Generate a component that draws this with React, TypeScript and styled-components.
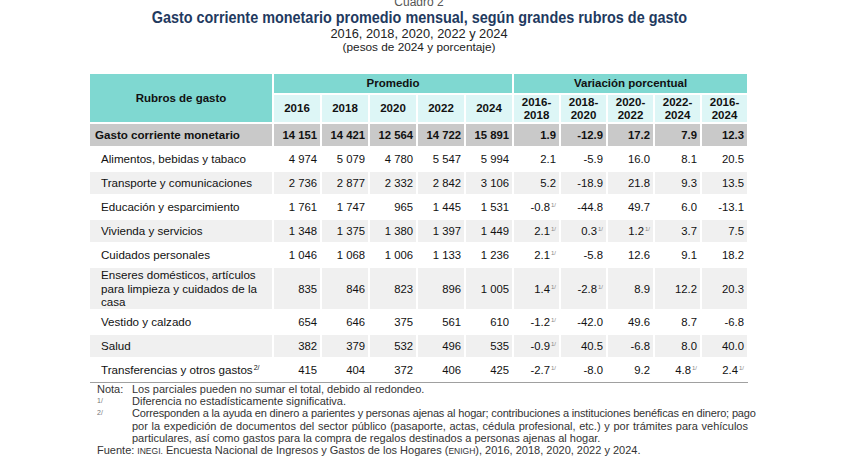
import React from 'react';
import styled, { createGlobalStyle } from 'styled-components';

const Global = createGlobalStyle`
  html, body { margin: 0; padding: 0; background: #ffffff; }
  body {
    width: 850px;
    height: 459px;
    overflow: hidden;
    font-family: "Liberation Sans", Arial, sans-serif;
  }
`;

const Sheet = styled.div`
  width: 658px;
  margin-left: 90px;
  display: flex;
  flex-direction: column;
`;

const Heading = styled.header`
  display: flex;
  flex-direction: column;
  align-items: center;
  margin-top: -5px;
  margin-bottom: 20px;
  color: #222;
`;

const Caption = styled.div`
  font-size: 12px;
  line-height: 14px;
  color: #555;
`;

const Title = styled.h1`
  margin: 0;
  display: inline-block;
  font-size: 16px;
  line-height: 18px;
  font-weight: bold;
  color: #1f3a60;
  white-space: nowrap;
  transform: scaleX(0.9);
`;

const Subtitle = styled.div`
  font-size: 12.8px;
  line-height: 14px;
`;

const Units = styled.div`
  font-size: 11.8px;
  line-height: 13px;
`;

const Table = styled.table`
  border-collapse: separate;
  border-spacing: 2px;
  table-layout: fixed;
  width: 661px;
  margin: -2px -2px -1px -2px;
  font-size: 11.3px;
  color: #111;
`;

const HeadCell = styled.th<{ $tone: 'dark' | 'light'; $h?: number }>`
  background: ${(p) => (p.$tone === 'dark' ? '#7fd8d1' : '#ddf6f6')};
  font-weight: bold;
  text-align: center;
  vertical-align: middle;
  padding: 0 1px;
  height: ${(p) => p.$h ?? 19}px;
  line-height: 13px;
  font-size: 11.5px;
`;

const Row = styled.tr<{ $tone: 'total' | 'shade' | 'plain' }>`
  & > td {
    background: ${(p) =>
      p.$tone === 'total' ? '#c9c9c9' : p.$tone === 'shade' ? '#f0f0f0' : '#ffffff'};
    font-weight: ${(p) => (p.$tone === 'total' ? 'bold' : 'normal')};
  }
`;

const LabelCell = styled.td<{ $indent: number; $h?: number }>`
  text-align: left;
  padding: 0 0 0 ${(p) => p.$indent}px;
  height: ${(p) => p.$h ?? 22}px;
  line-height: 13.5px;
  font-size: 11.6px;
  white-space: nowrap;
`;

const NumCell = styled.td`
  text-align: right;
  padding: 0 3px 0 0;
  white-space: nowrap;
`;

const Mark = styled.sup<{ $dark?: boolean }>`
  font-size: ${(p) => (p.$dark ? '7px' : '6px')};
  font-weight: normal;
  line-height: 0;
  vertical-align: 4px;
  color: ${(p) => (p.$dark ? '#111' : '#888')};
  margin-left: 1px;
`;

const Notes = styled.div`
  border-top: 1px solid #a0a0a0;
  padding: 0 0 0 7px;
  display: grid;
  grid-template-columns: 35px 1fr;
  font-size: 11px;
  line-height: 12.2px;
  color: #333;
`;

const NoteLabel = styled.div<{ $small?: boolean }>`
  font-size: ${(p) => (p.$small ? '7px' : 'inherit')};
  color: ${(p) => (p.$small ? '#777' : 'inherit')};
`;

const NoteText = styled.div`
  min-width: 0;
`;

const NoteLine = styled.div<{ $justify?: boolean; $tight?: boolean }>`
  white-space: nowrap;
  text-align: ${(p) => (p.$justify ? 'justify' : 'left')};
  text-align-last: ${(p) => (p.$justify ? 'justify' : 'auto')};
  letter-spacing: ${(p) => (p.$tight ? '-0.16px' : 'normal')};
`;

const Source = styled.div`
  grid-column: 1 / -1;
`;

const SmallCaps = styled.span`
  font-size: 8.5px;
`;

type Cell = string | [string, string];

interface DataRow {
  label: React.ReactNode;
  values: Cell[];
  tone: 'total' | 'shade' | 'plain';
  indent: number;
  h?: number;
}

const rows: DataRow[] = [
  {
    label: 'Gasto corriente monetario',
    values: ['14 151', '14 421', '12 564', '14 722', '15 891', '1.9', '-12.9', '17.2', '7.9', '12.3'],
    tone: 'total',
    indent: 5,
  },
  {
    label: 'Alimentos, bebidas y tabaco',
    values: ['4 974', '5 079', '4 780', '5 547', '5 994', '2.1', '-5.9', '16.0', '8.1', '20.5'],
    tone: 'plain',
    indent: 11,
  },
  {
    label: 'Transporte y comunicaciones',
    values: ['2 736', '2 877', '2 332', '2 842', '3 106', '5.2', '-18.9', '21.8', '9.3', '13.5'],
    tone: 'shade',
    indent: 11,
  },
  {
    label: 'Educación y esparcimiento',
    values: ['1 761', '1 747', '965', '1 445', '1 531', ['-0.8', '1/'], '-44.8', '49.7', '6.0', '-13.1'],
    tone: 'plain',
    indent: 11,
  },
  {
    label: 'Vivienda y servicios',
    values: ['1 348', '1 375', '1 380', '1 397', '1 449', ['2.1', '1/'], ['0.3', '1/'], ['1.2', '1/'], '3.7', '7.5'],
    tone: 'shade',
    indent: 11,
  },
  {
    label: 'Cuidados personales',
    values: ['1 046', '1 068', '1 006', '1 133', '1 236', ['2.1', '1/'], '-5.8', '12.6', '9.1', '18.2'],
    tone: 'plain',
    indent: 11,
  },
  {
    label: (
      <>
        Enseres domésticos, artículos
        <br />
        para limpieza y cuidados de la
        <br />
        casa
      </>
    ),
    values: ['835', '846', '823', '896', '1 005', ['1.4', '1/'], ['-2.8', '1/'], '8.9', '12.2', '20.3'],
    tone: 'shade',
    indent: 11,
    h: 41,
  },
  {
    label: 'Vestido y calzado',
    values: ['654', '646', '375', '561', '610', ['-1.2', '1/'], '-42.0', '49.6', '8.7', '-6.8'],
    tone: 'plain',
    indent: 11,
  },
  {
    label: 'Salud',
    values: ['382', '379', '532', '496', '535', ['-0.9', '1/'], '40.5', '-6.8', '8.0', '40.0'],
    tone: 'shade',
    indent: 11,
  },
  {
    label: (
      <>
        Transferencias y otros gastos<Mark $dark>2/</Mark>
      </>
    ),
    values: ['415', '404', '372', '406', '425', ['-2.7', '1/'], '-8.0', '9.2', ['4.8', '1/'], ['2.4', '1/']],
    tone: 'plain',
    indent: 11,
  },
];

const years = ['2016', '2018', '2020', '2022', '2024'];
const ranges = ['2016-2018', '2018-2020', '2020-2022', '2022-2024', '2016-2024'];

function renderCell(c: Cell, i: number) {
  if (typeof c === 'string') return <NumCell key={i}>{c}</NumCell>;
  return (
    <NumCell key={i}>
      {c[0]}
      <Mark>{c[1]}</Mark>
    </NumCell>
  );
}

export default function App() {
  return (
    <>
      <Global />
      <Sheet>
        <Heading>
          <Caption>Cuadro 2</Caption>
          <Title>Gasto corriente monetario promedio mensual, según grandes rubros de gasto</Title>
          <Subtitle>2016, 2018, 2020, 2022 y 2024</Subtitle>
          <Units>(pesos de 2024 y porcentaje)</Units>
        </Heading>
        <Table>
          <colgroup>
            <col style={{ width: 182 }} />
            {years.map((y) => (
              <col key={y} style={{ width: 46 }} />
            ))}
            {ranges.map((r) => (
              <col key={r} style={{ width: 45 }} />
            ))}
          </colgroup>
          <thead>
            <tr>
              <HeadCell $tone="dark" rowSpan={2}>
                Rubros de gasto
              </HeadCell>
              <HeadCell $tone="dark" colSpan={5}>
                Promedio
              </HeadCell>
              <HeadCell $tone="dark" colSpan={5}>
                Variación porcentual
              </HeadCell>
            </tr>
            <tr>
              {years.map((y) => (
                <HeadCell key={y} $tone="light" $h={27}>
                  {y}
                </HeadCell>
              ))}
              {ranges.map((r) => {
                const [a, b] = r.split('-');
                return (
                  <HeadCell key={r} $tone="light" $h={27}>
                    {a}-
                    <br />
                    {b}
                  </HeadCell>
                );
              })}
            </tr>
          </thead>
          <tbody>
            {rows.map((r, i) => (
              <Row key={i} $tone={r.tone}>
                <LabelCell $indent={r.indent} $h={r.h}>
                  {r.label}
                </LabelCell>
                {r.values.map(renderCell)}
              </Row>
            ))}
          </tbody>
        </Table>
        <Notes>
          <NoteLabel>Nota:</NoteLabel>
          <NoteText>Los parciales pueden no sumar el total, debido al redondeo.</NoteText>
          <NoteLabel $small>1/</NoteLabel>
          <NoteText>Diferencia no estadísticamente significativa.</NoteText>
          <NoteLabel $small>2/</NoteLabel>
          <NoteText>
            <NoteLine $justify $tight>
              Corresponden a la ayuda en dinero a parientes y personas ajenas al hogar; contribuciones a instituciones benéficas en dinero; pago
            </NoteLine>
            <NoteLine $justify>
              por la expedición de documentos del sector público (pasaporte, actas, cédula profesional, etc.) y por trámites para vehículos
            </NoteLine>
            <NoteLine>
              particulares, así como gastos para la compra de regalos destinados a personas ajenas al hogar.
            </NoteLine>
          </NoteText>
          <Source>
            Fuente: <SmallCaps>INEGI.</SmallCaps> Encuesta Nacional de Ingresos y Gastos de los Hogares (
            <SmallCaps>ENIGH</SmallCaps>), 2016, 2018, 2020, 2022 y 2024.
          </Source>
        </Notes>
      </Sheet>
    </>
  );
}
